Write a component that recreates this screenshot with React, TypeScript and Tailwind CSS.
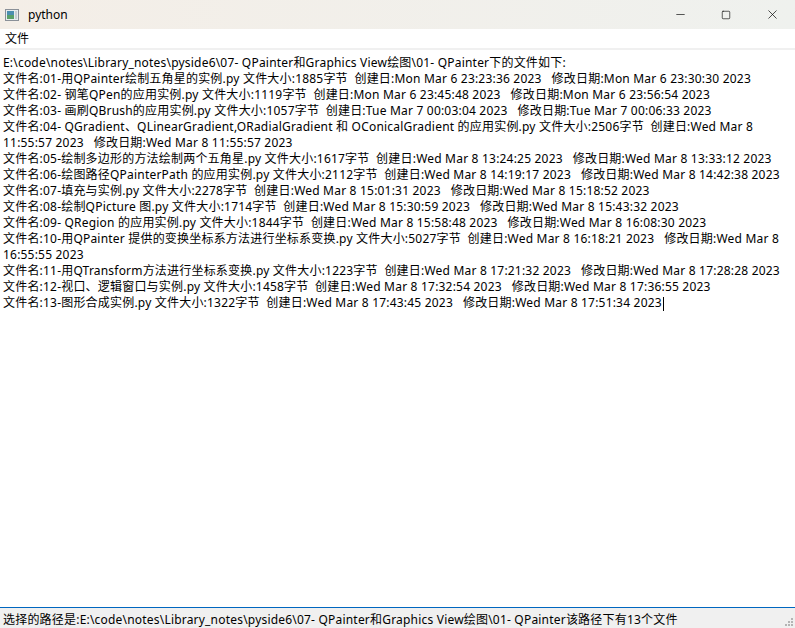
import { Minus, Square, X } from "lucide-react";

const basePath = "E:\\code\\notes\\Library_notes\\pyside6\\07- QPainter和Graphics View绘图\\01- QPainter";

// each entry is one visual line, wrapped the way the window shows it
const lines: string[] = [
  `${basePath}下的文件如下:`,
  "文件名:01-用QPainter绘制五角星的实例.py 文件大小:1885字节  创建日:Mon Mar 6 23:23:36 2023   修改日期:Mon Mar 6 23:30:30 2023",
  "文件名:02- 钢笔QPen的应用实例.py 文件大小:1119字节  创建日:Mon Mar 6 23:45:48 2023   修改日期:Mon Mar 6 23:56:54 2023",
  "文件名:03- 画刷QBrush的应用实例.py 文件大小:1057字节  创建日:Tue Mar 7 00:03:04 2023   修改日期:Tue Mar 7 00:06:33 2023",
  "文件名:04- QGradient、QLinearGradient,ORadialGradient 和 OConicalGradient 的应用实例.py 文件大小:2506字节  创建日:Wed Mar 8",
  "11:55:57 2023   修改日期:Wed Mar 8 11:55:57 2023",
  "文件名:05-绘制多边形的方法绘制两个五角星.py 文件大小:1617字节  创建日:Wed Mar 8 13:24:25 2023   修改日期:Wed Mar 8 13:33:12 2023",
  "文件名:06-绘图路径QPainterPath 的应用实例.py 文件大小:2112字节  创建日:Wed Mar 8 14:19:17 2023   修改日期:Wed Mar 8 14:42:38 2023",
  "文件名:07-填充与实例.py 文件大小:2278字节  创建日:Wed Mar 8 15:01:31 2023   修改日期:Wed Mar 8 15:18:52 2023",
  "文件名:08-绘制QPicture 图.py 文件大小:1714字节  创建日:Wed Mar 8 15:30:59 2023   修改日期:Wed Mar 8 15:43:32 2023",
  "文件名:09- QRegion 的应用实例.py 文件大小:1844字节  创建日:Wed Mar 8 15:58:48 2023   修改日期:Wed Mar 8 16:08:30 2023",
  "文件名:10-用QPainter 提供的变换坐标系方法进行坐标系变换.py 文件大小:5027字节  创建日:Wed Mar 8 16:18:21 2023   修改日期:Wed Mar 8",
  "16:55:55 2023",
  "文件名:11-用QTransform方法进行坐标系变换.py 文件大小:1223字节  创建日:Wed Mar 8 17:21:32 2023   修改日期:Wed Mar 8 17:28:28 2023",
  "文件名:12-视口、逻辑窗口与实例.py 文件大小:1458字节  创建日:Wed Mar 8 17:32:54 2023   修改日期:Wed Mar 8 17:36:55 2023",
  "文件名:13-图形合成实例.py 文件大小:1322字节  创建日:Wed Mar 8 17:43:45 2023   修改日期:Wed Mar 8 17:51:34 2023",
];

const font = "font-['Noto_Sans','Noto_Sans_CJK_SC',sans-serif]";

function TitleBar() {
  return (
    <div className="flex h-[29px] items-center bg-gradient-to-r from-[#f4eee7] to-[#eff1ee]">
      <svg width="14" height="12" viewBox="0 0 14 12" className="ml-[5px]">
        <rect x="0.5" y="0.5" width="13" height="11" fill="#e8ecef" stroke="#8a9098" />
        <rect x="2" y="2" width="7" height="8" fill="#4c8fb0" />
        <rect x="2" y="6" width="7" height="4" fill="#5aa06a" />
        <rect x="10" y="2" width="2" height="8" fill="#c9ced3" />
      </svg>
      <span className="ml-[9px] text-[12px] text-black">python</span>
      <div className="ml-auto flex h-full items-center">
        <span className="flex w-[46px] justify-center">
          <Minus size={13} strokeWidth={1.2} />
        </span>
        <span className="flex w-[46px] justify-center">
          <Square size={10} strokeWidth={1.5} />
        </span>
        <span className="flex w-[46px] justify-center">
          <X size={15} strokeWidth={1.1} />
        </span>
      </div>
    </div>
  );
}

function SizeGrip() {
  const dots = [
    [6, 0],
    [3, 3],
    [6, 3],
    [0, 6],
    [3, 6],
    [6, 6],
  ];
  return (
    <svg width="8" height="8" viewBox="0 0 8 8" className="absolute right-[2px] bottom-[2px]">
      {dots.map(([x, y]) => (
        <rect key={`${x}-${y}`} x={x} y={y} width="2" height="2" fill="#b4b4b4" />
      ))}
    </svg>
  );
}

export default function App() {
  return (
    <div className={`flex h-[628px] w-[795px] flex-col overflow-hidden bg-white text-black ${font}`}>
      <TitleBar />

      <div className="flex h-[21px] items-center border-b-2 border-[#f0f0f0] bg-white px-[5px] text-[12px]">
        文件
      </div>

      <div className="flex-1 bg-white px-[3px] pt-[5px] text-[12px] leading-[16px] tracking-[0.2px]">
        {lines.map((line, index) => (
          <div key={index} className="whitespace-pre">
            {line}
            {index === lines.length - 1 ? (
              <span className="ml-[1px] inline-block h-[14px] w-px bg-black align-middle" />
            ) : null}
          </div>
        ))}
      </div>

      <div className="relative flex h-[21px] items-center border-t border-[#0067c0] bg-[#f0f0f0] px-[3px] pt-[3px] text-[12px] tracking-[0.2px]">
        选择的路径是:{basePath}该路径下有13个文件
        <SizeGrip />
      </div>
    </div>
  );
}
